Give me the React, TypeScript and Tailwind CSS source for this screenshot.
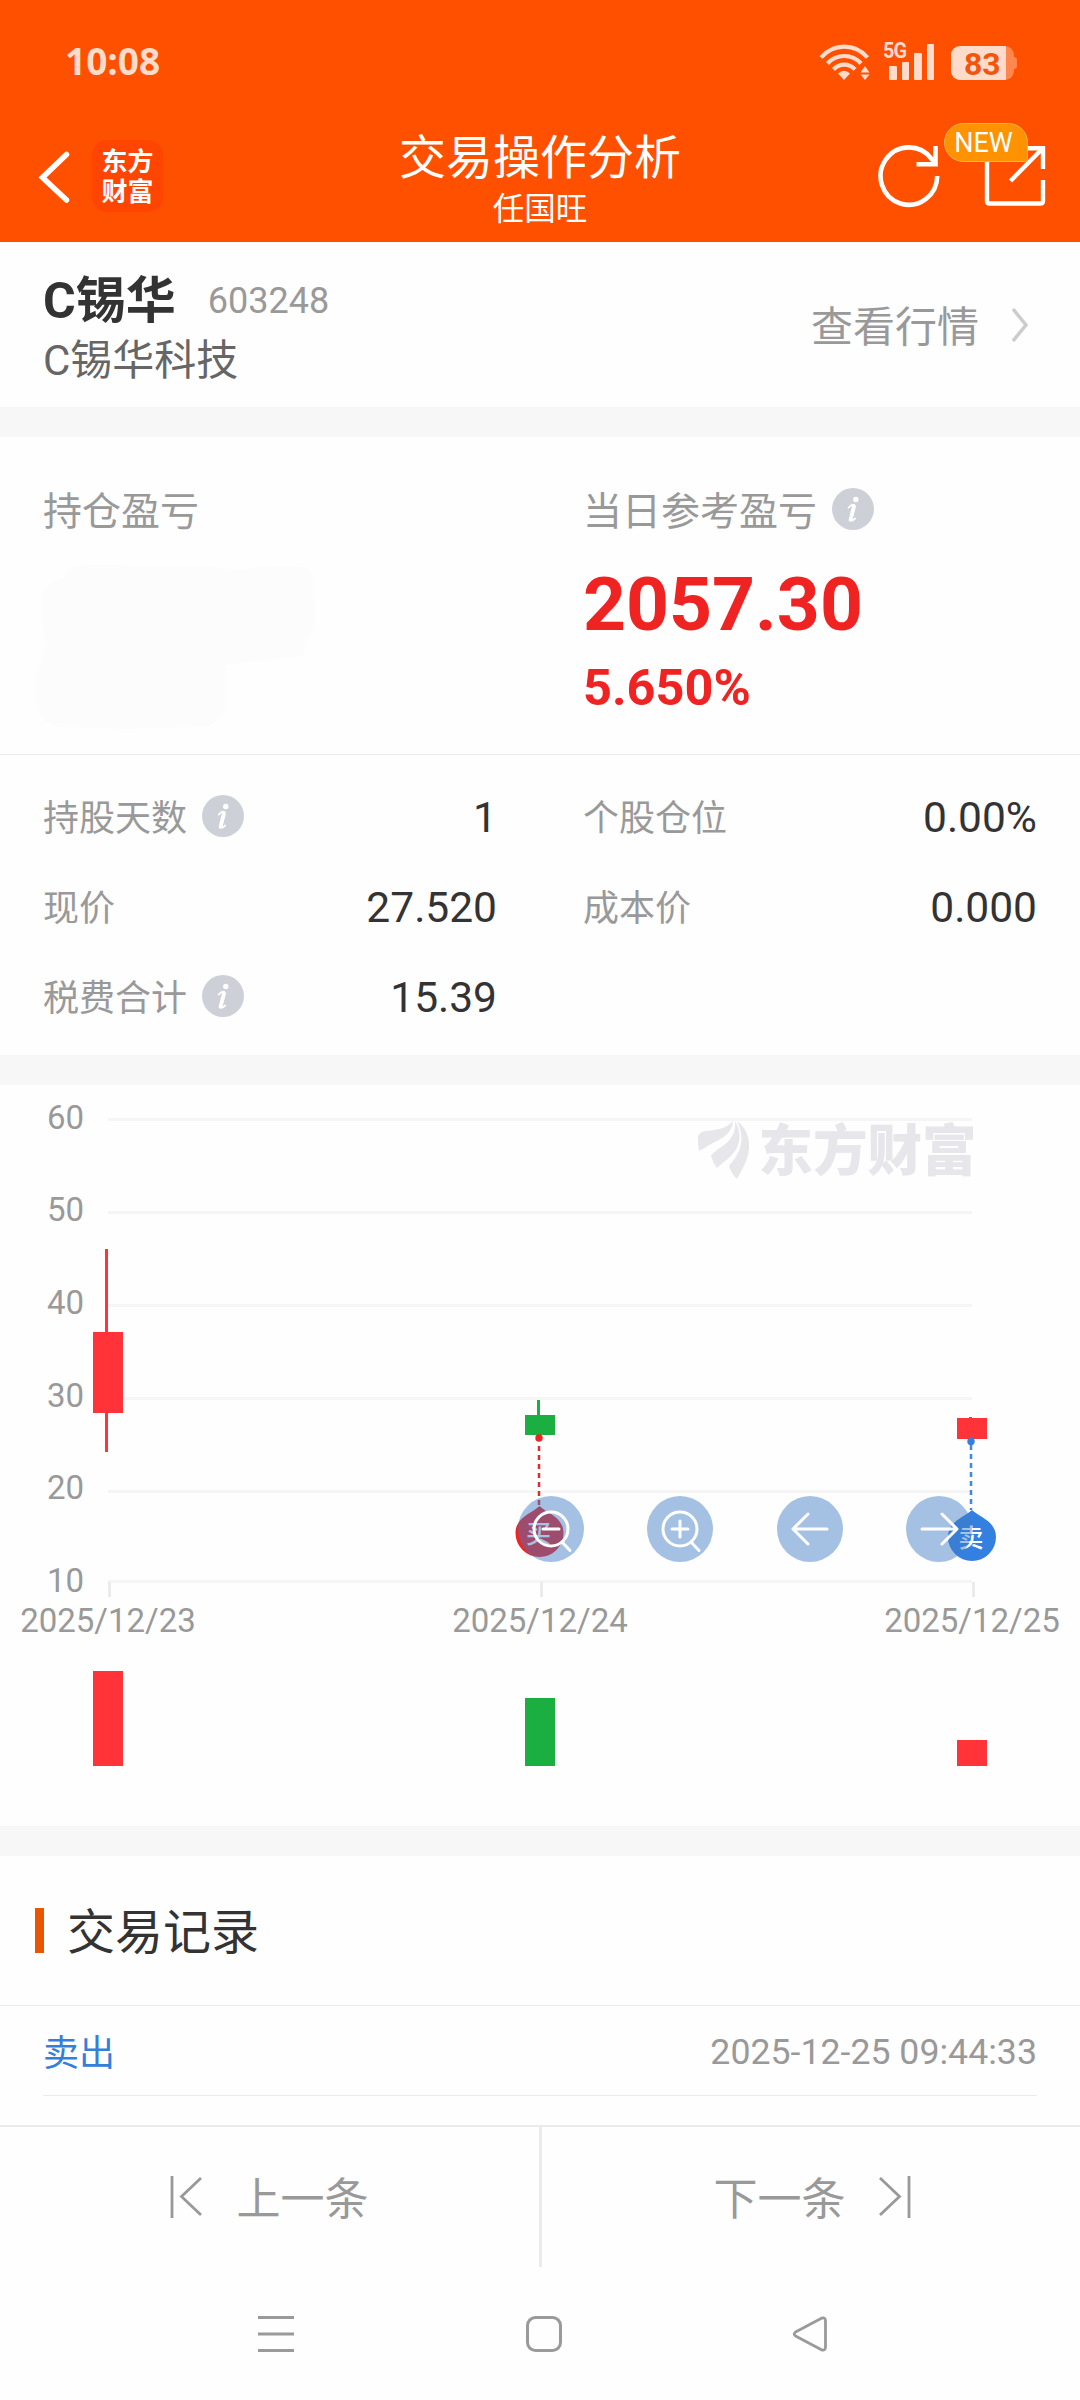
import { clsx } from "clsx";
import type { ReactNode } from "react";

const RED = "#ff3338";
const GREEN = "#1aaf40";

const candles = [
    { x: 108, date: "2025/12/23", color: RED, top: 247, bottom: 328, high: 164, low: 367, volume: 95 },
    { x: 540, date: "2025/12/24", color: GREEN, top: 330, bottom: 350, high: 315, low: 350, volume: 68 },
    { x: 972, date: "2025/12/25", color: RED, top: 333, bottom: 354, high: 332, low: 354, volume: 26 },
];

const gridLines = [
    { label: "60", y: 34 },
    { label: "50", y: 127 },
    { label: "40", y: 220 },
    { label: "30", y: 313 },
    { label: "20", y: 406 },
    { label: "10", y: 496 },
];

// label baselines are evenly spaced, unlike the grid lines
const labelBaselines = [43.5, 136, 229, 321.5, 414, 506.5];

function InfoIcon() {
    return (
        <svg className="-mt-[6px] h-[42px] w-[42px] shrink-0" viewBox="0 0 42 42">
            <circle cx="21" cy="21" r="21" fill="#cdd0d6" />
            <circle cx="23.8" cy="11.5" r="2.7" fill="#fff" />
            <path
                d="M16.6 19.6c2-2.2 4.6-3.3 5.8-2.6 1.2.8.3 3.2-.7 6.6l-1.7 5.8c-.6 2.4-.5 3.5.5 3.1.8-.3 1.6-1.1 2.7-2.1"
                fill="none"
                stroke="#fff"
                strokeWidth="1.7"
                strokeLinecap="round"
            />
            <path d="M21.8 18.5l-3.3 13.5" stroke="#fff" strokeWidth="3.6" strokeLinecap="round" />
        </svg>
    );
}

function StatusBar() {
    return (
        <div className="flex h-[122px] items-start justify-between pl-[65px] pr-[63px] text-[#ffdbcc]">
            <span className="mt-[41px] font-['Open_Sans'] text-[37px] font-bold leading-[40px]">10:08</span>
            <div className="mt-[42px] flex items-start">
                <svg className="h-[40px] w-[54px]" viewBox="0 0 54 40" fill="none" stroke="currentColor" strokeWidth="4.2">
                    <path d="M2 15.5C14.5 1 36 1 48.5 15.5" />
                    <path d="M8.5 21.5C17.5 11.5 33 11.5 42 21.5" />
                    <path d="M14.5 27.5C20.5 21 30 21 36 27.5" />
                    <path d="M19 31.5Q25 26 31 31.5L25 38Z" fill="currentColor" stroke="none" />
                    <path d="M41.5 30.5l4.5-6.5 4.5 6.5zM41.5 32.5h9l-4.5 5.5z" fill="currentColor" stroke="none" />
                </svg>
                <div className="relative ml-[10px] flex h-[38px] w-[52px] items-end gap-[5px] pl-[6px]">
                    <span className="absolute left-0 top-0 origin-left scale-x-90 text-[22px] font-bold leading-[18px] tracking-[-1px]">5G</span>
                    <i className="h-[14px] w-[7.5px] rounded-[1px] bg-current" />
                    <i className="h-[18px] w-[7.5px] rounded-[1px] bg-current" />
                    <i className="h-[27px] w-[7.5px] rounded-[1px] bg-current" />
                    <i className="h-[36px] w-[7.5px] rounded-[1px] bg-current" />
                </div>
                <div className="ml-[16px] mt-[4px] flex items-center">
                    <div className="flex h-[34px] w-[63px] rounded-[9px] bg-[#ff864d]">
                        <div className="w-[55px] rounded-l-[9px] bg-[#ffdbcc] pl-[13px] text-[32px] font-bold leading-[36px] text-[#f2560d]">83</div>
                    </div>
                    <i className="h-[12px] w-[3px] rounded-r-[3px] bg-[#ff864d]" />
                </div>
            </div>
        </div>
    );
}

function TitleBar() {
    return (
        <div className="grid h-[120px] grid-cols-[1fr_auto_1fr] text-white">
            <div className="flex items-start pl-[38px] pt-[18px]">
                <svg className="mt-[9px] h-[56px] w-[34px]" viewBox="0 0 34 56" fill="none" stroke="#fff" strokeWidth="5.5" strokeLinecap="round">
                    <path d="M28.5 5.5L4.5 28.5 28.5 51" />
                </svg>
                <div className="ml-5 flex h-[72px] w-[71px] flex-col items-center rounded-[15px] bg-[#ff4500] pt-[8px] text-[26px] font-bold leading-[29.5px]">
                    <span>东方</span>
                    <span>财富</span>
                </div>
            </div>
            <div className="flex flex-col items-center pt-[8px]">
                <h1 className="text-[47px] leading-[56px]">交易操作分析</h1>
                <p className="mt-1 text-[31.5px] leading-[40px]">任国旺</p>
            </div>
            <div className="flex justify-end pr-[33px] pt-[18px]">
                <svg className="h-[70px] w-[66px]" viewBox="0 0 66 70" fill="none" stroke="#fff" strokeWidth="4.6">
                    <path d="M62.2 36A28.3 28.7 0 1 1 56.5 18.8L60 23" />
                    <path d="M60.5 6v18.2H41.5" />
                </svg>
                <div className="relative ml-[40px]">
                    <svg className="h-[70px] w-[66px]" viewBox="0 0 66 70" fill="none" stroke="#fff" strokeWidth="4.4">
                        <path d="M6 10V61q0 2.5 2.5 2.5H59.5q2.5 0 2.5-2.5V40" />
                        <path d="M40 8.3H62V29" />
                        <path d="M29.5 41L60.5 9.5" />
                    </svg>
                    <span className="absolute left-[-37.5px] top-[-17px] h-[39px] w-[84px] rounded-[20px] rounded-br-[3px] border border-[#ffb24d] bg-[#ff9200] pr-[4px] text-center text-[27px] leading-[38px]">
                        NEW
                    </span>
                </div>
            </div>
        </div>
    );
}

function StatRow({ label, value, info }: { label: string; value: string; info?: boolean }) {
    return (
        <div className="flex h-[90px] items-center justify-between">
            <span className="flex items-center gap-[15px] pt-[3px] text-[36px] text-[#999]">
                {label}
                {info && <InfoIcon />}
            </span>
            <span className="pt-[2px] text-[42.5px] text-[#333]">{value}</span>
        </div>
    );
}

function Pin({ x, y, color, text }: { x: number; y: number; color: string; text: string }) {
    return (
        <g>
            <path
                d={`M${x} ${y}C${x + 7} ${y + 7} ${x + 24} ${y + 11} ${x + 24} ${y + 27}A24 24 0 0 1 ${x - 24} ${y + 27}C${x - 24} ${y + 11} ${x - 7} ${y + 7} ${x} ${y}Z`}
                fill={color}
            />
            <text x={x - 1} y={y + 37} fontSize="25" fontWeight="500" fill="#fff" textAnchor="middle">
                {text}
            </text>
        </g>
    );
}

function ChartButton({ x, children }: { x: number; children: ReactNode }) {
    return (
        <g transform={`translate(${x} 444)`} fill="none" stroke="#fff" strokeWidth="3" strokeLinecap="round" strokeLinejoin="round">
            <circle r="33" fill="rgba(63,123,195,0.47)" stroke="none" />
            {children}
        </g>
    );
}

function CandleChart() {
    return (
        <svg className="block h-[741px] w-full" viewBox="0 0 1080 741">
            {gridLines.map((line, i) => (
                <g key={line.label}>
                    <rect x="108" y={line.y - 1} width="864" height="3" fill="#f5f5f5" />
                    <text x="84" y={labelBaselines[i]} fontSize="33" fill="#999" textAnchor="end">
                        {line.label}
                    </text>
                </g>
            ))}

            {/* watermark */}
            <g fill="#e6e6eb">
                <path d="M698 52Q699 47 706 46C720 45 728 42 733 36C732 52 716 55 703 64Q697 66 699 67Q698 60 698 52Z" />
                <path d="M735 36C741 46 741 58 735 66C730 73 722 78 717 83Q713 78 711 71C716 62 737 59 735 36Z" />
                <path d="M737 36C748 44 751 57 748 70C745 81 740 88 737 94Q731 88 729 81C736 72 748 59 737 36Z" />
                <text x="758.5" y="85" fontSize="54.5" fontWeight="900">
                    东方财富
                </text>
            </g>

            {candles.map((c) => (
                <g key={c.date}>
                    <rect x={c.x} y="497" width="3" height="15" fill="#ebebeb" />
                    <text x={c.x} y="547" fontSize="33" fill="#999" textAnchor="middle">
                        {c.date}
                    </text>
                    <rect x={c.x - 3} y={c.high} width="3" height={c.low - c.high} fill={c.color} />
                    <rect x={c.x - 15} y={c.top} width="30" height={c.bottom - c.top} fill={c.color} />
                    <rect x={c.x - 15} y={681 - c.volume} width="30" height={c.volume} fill={c.color} />
                </g>
            ))}

            {/* trade markers */}
            <circle cx="539" cy="353" r="3.7" fill="#f02323" />
            <path d="M539 361V422" stroke="#e02c2c" strokeWidth="2.5" strokeDasharray="5 4" />
            <Pin x={539.5} y={421} color="#f02323" text="买" />
            <circle cx="971" cy="356.5" r="3.7" fill="#3480e0" />
            <path d="M971 360V425" stroke="#3f8ae0" strokeWidth="2.5" strokeDasharray="5 4" />
            <Pin x={972} y={425} color="#3480e0" text="卖" />

            <ChartButton x={551}>
                <circle cx="0" cy="0" r="17" />
                <path d="M-8 0H8M11 13L19 21.5" />
            </ChartButton>
            <ChartButton x={680}>
                <circle cx="0" cy="0" r="17" />
                <path d="M-8 0H8M0-8V8M11 13L19 21.5" />
            </ChartButton>
            <ChartButton x={810}>
                <path d="M17 0H-17M-2-15L-17 0-2 15" />
            </ChartButton>
            <ChartButton x={939}>
                <path d="M-17 0H17M3-15L18 0 3 15" />
            </ChartButton>
        </svg>
    );
}

function Divider({ className }: { className?: string }) {
    return <div className={clsx("h-px bg-[#ebebeb]", className)} />;
}

export default function App() {
    return (
        <div className="flex h-[2400px] w-[1080px] flex-col overflow-hidden bg-[#fefefe] font-['Roboto','Noto_Sans_CJK_SC',sans-serif]">
            <header className="bg-[#ff5000]">
                <StatusBar />
                <TitleBar />
            </header>

            <section className="flex h-[165px] justify-between pl-[43px] pr-[52px]">
                <div className="pt-[27px]">
                    <div className="flex items-start leading-[64px]">
                        <h2 className="text-[50px] font-bold text-[#333]">C锡华</h2>
                        <span className="ml-[32px] text-[36px] text-[#999]">603248</span>
                    </div>
                    <p className="text-[42px] leading-[56px] text-[#666]">C锡华科技</p>
                </div>
                <div className="flex items-center gap-[33px] text-[42px] text-[#999]">
                    <span className="pt-[5px]">查看行情</span>
                    <svg className="h-[34px] w-[16px]" viewBox="0 0 16 34" fill="none" stroke="#ccc" strokeWidth="3.5">
                        <path d="M1 1L14 17 1 33" />
                    </svg>
                </div>
            </section>

            <div className="h-[30px] bg-[#f7f7f7]" />

            <section className="grid h-[317px] grid-cols-2 pt-[51px]">
                <div className="pl-[43px]">
                    <p className="text-[39px] leading-[48px] text-[#999]">持仓盈亏</p>
                    <svg className="-ml-[7px] mt-[25px] h-[172px] w-[280px]" viewBox="0 0 280 172" fill="#fcfcfc">
                        <path d="M32 8Q40 3 62 4L170 5 200 9 230 5 268 6Q278 8 278 30L279 62 275 72Q269 80 268 95L240 98 190 104V140Q188 160 170 166L90 168 20 166Q4 160 0 140V112Q6 95 12 85L5 60V32Q12 20 28 17Z" />
                    </svg>
                </div>
                <div className="pl-[43px]">
                    <p className="flex items-center gap-[15px] text-[39px] leading-[48px] text-[#999]">
                        当日参考盈亏
                        <InfoIcon />
                    </p>
                    <p className="mt-[24px] text-[75px] font-bold leading-[88px] text-[#f02323]">2057.30</p>
                    <p className="mt-[10px] text-[50.5px] font-bold leading-[60px] text-[#f02323]">5.650%</p>
                </div>
            </section>

            <Divider />

            <section className="grid h-[300px] grid-cols-2 content-start pt-[17px]">
                <div className="px-[43px]">
                    <StatRow label="持股天数" value="1" info />
                    <StatRow label="现价" value="27.520" />
                    <StatRow label="税费合计" value="15.39" info />
                </div>
                <div className="px-[43px]">
                    <StatRow label="个股仓位" value="0.00%" />
                    <StatRow label="成本价" value="0.000" />
                </div>
            </section>

            <div className="h-[30px] bg-[#f7f7f7]" />
            <CandleChart />
            <div className="h-[30px] bg-[#f7f7f7]" />

            <section className="h-[269px]">
                <div className="flex h-[149px] items-center gap-[23px] pl-[35px]">
                    <i className="h-[45px] w-[9px] bg-[#ea5504]" />
                    <h3 className="pt-[5px] text-[48px] leading-[56px] text-[#333]">交易记录</h3>
                </div>
                <Divider />
                <div className="mx-[43px]">
                    <div className="flex h-[89px] items-center justify-between pt-[5px] text-[36px]">
                        <span className="pt-[1px] text-[#3480d8]">卖出</span>
                        <span className="text-[35.7px] text-[#999]">2025-12-25 09:44:33</span>
                    </div>
                    <Divider />
                </div>
            </section>

            <nav className="grid h-[142px] grid-cols-2 border-t-2 border-[#ebebeb] text-[44px] text-[#999]">
                <button className="flex items-center justify-center gap-[35px] border-r border-[#ebebeb] pr-px">
                    <svg className="h-[44px] w-[32px]" viewBox="0 0 32 44" fill="none" stroke="currentColor" strokeWidth="2.8">
                        <path d="M2 1V43M31 3L11.5 21.5 31 40" />
                    </svg>
                    <span className="pt-[5px]">上一条</span>
                </button>
                <button className="flex items-center justify-center gap-[33px] border-l-2 border-[#ebebeb] pl-[2px]">
                    <span className="pt-[5px]">下一条</span>
                    <svg className="h-[44px] w-[32px]" viewBox="0 0 32 44" fill="none" stroke="currentColor" strokeWidth="2.8">
                        <path d="M30 1V43M1 3L20.5 21.5 1 40" />
                    </svg>
                </button>
            </nav>

            <footer className="flex h-[133px] items-center justify-between pl-[257px] pr-[251px]">
                <svg className="h-[38px] w-[38px]" viewBox="0 0 38 38" stroke="#9a9a9a" strokeWidth="3">
                    <path d="M1 2.5H37M1 19H37M1 35.5H37" />
                </svg>
                <svg className="ml-[2px] h-[38px] w-[38px]" viewBox="0 0 38 38" fill="none" stroke="#9a9a9a" strokeWidth="3">
                    <rect x="2.5" y="2.5" width="33" height="33" rx="8" />
                </svg>
                <svg className="h-[38px] w-[38px]" viewBox="0 0 38 38" fill="none" stroke="#9a9a9a" strokeWidth="2.8" strokeLinejoin="round">
                    <path d="M4.5 17L30.5 3.2Q34.5 2 34.5 6V32Q34.5 36 30.5 34.8L4.5 21Q2 19 4.5 17Z" />
                </svg>
            </footer>
        </div>
    );
}
